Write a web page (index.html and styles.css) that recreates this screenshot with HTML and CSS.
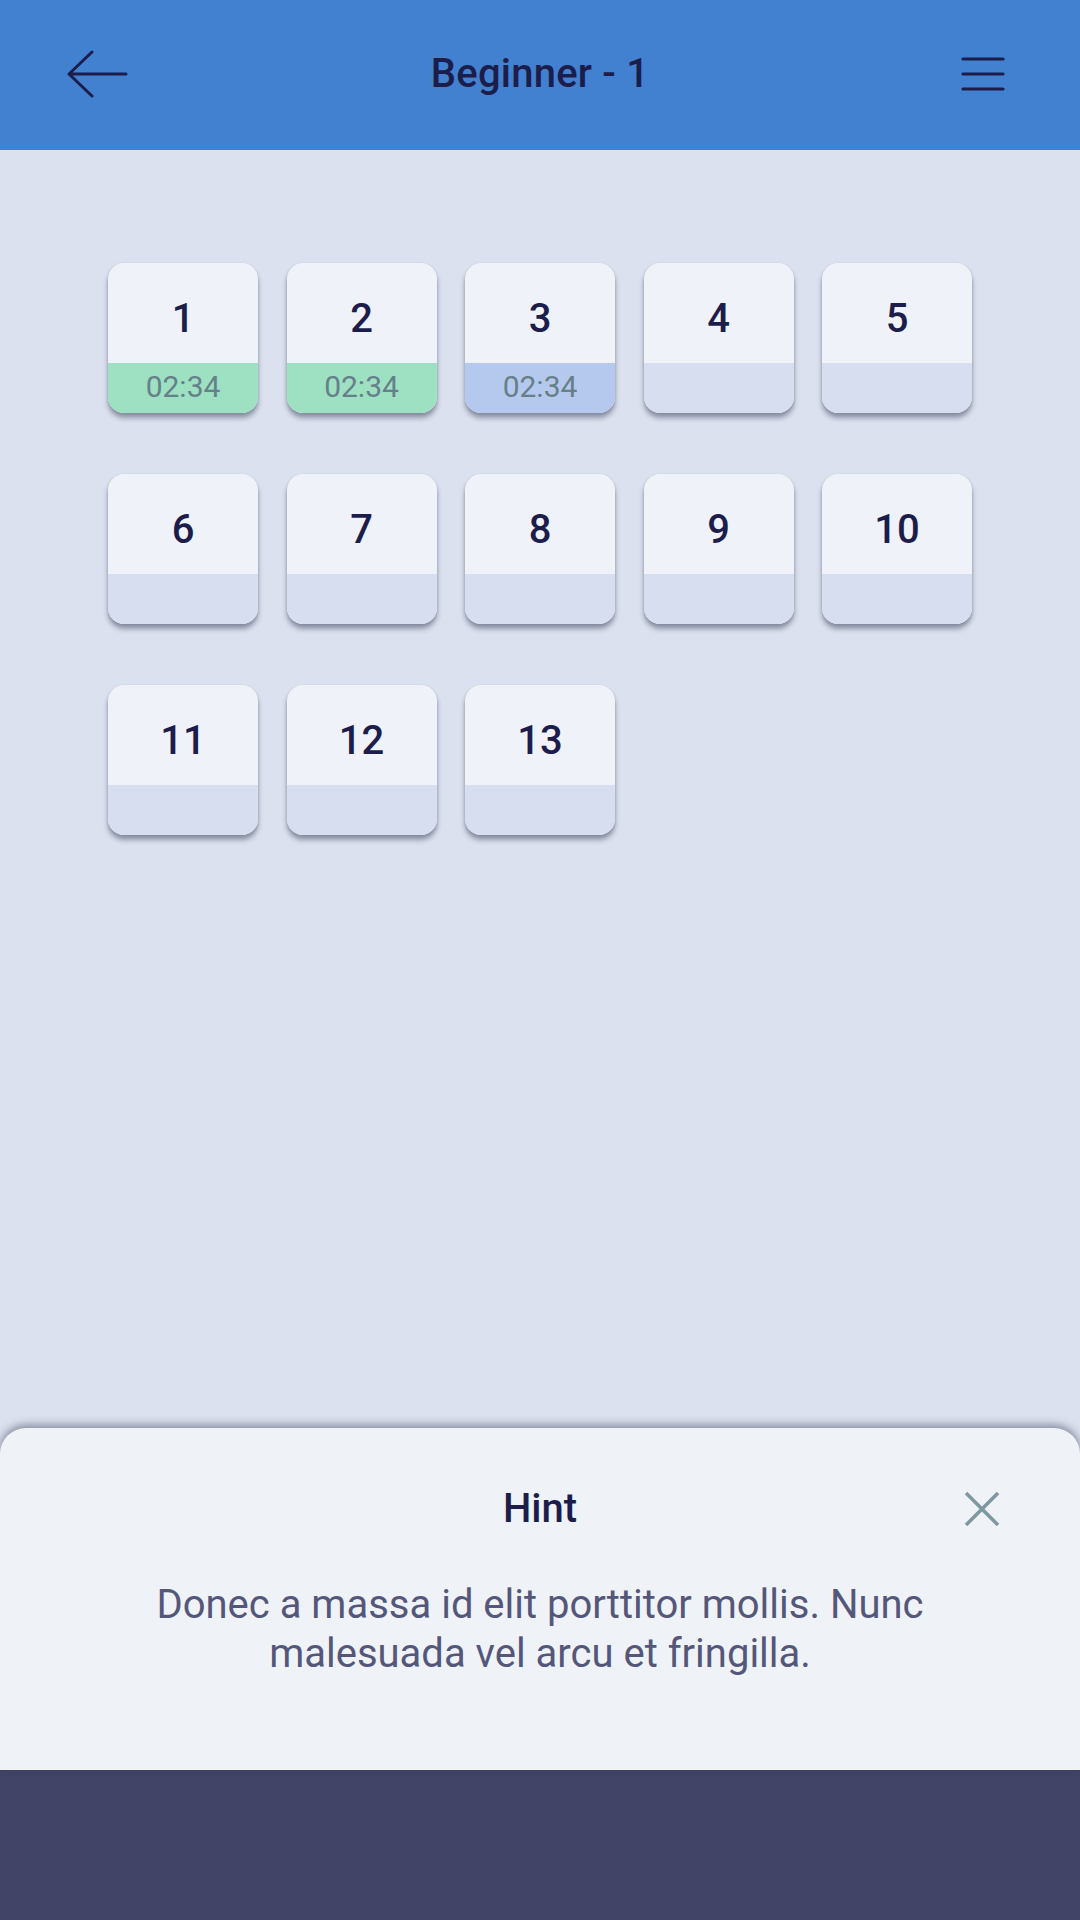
FILE: index.html
```html
<!DOCTYPE html>
<html lang="en">
<head>
<meta charset="utf-8">
<title>Beginner - 1</title>
<link rel="stylesheet" href="styles.css">
</head>
<body>
<div class="screen">
  <header class="topbar">
    <button class="icon-btn back" aria-label="Back">
      <svg width="62" height="48" viewBox="0 0 62 48"><path d="M60 24H3M26 2L3 24L26 46" fill="none" stroke="#1d1d4b" stroke-width="3" stroke-linecap="round" stroke-linejoin="round"/></svg>
    </button>
    <h1 class="title">Beginner - 1</h1>
    <button class="icon-btn menu" aria-label="Menu">
      <svg width="44" height="36" viewBox="0 0 44 36"><path d="M2 3H42M2 18H42M2 33H42" fill="none" stroke="#1d1d4b" stroke-width="3.2" stroke-linecap="round"/></svg>
    </button>
  </header>

  <main class="levels">
    <div class="grid">
      <div class="tile done"><div class="num">1</div><div class="time">02:34</div></div>
      <div class="tile done"><div class="num">2</div><div class="time">02:34</div></div>
      <div class="tile current"><div class="num">3</div><div class="time">02:34</div></div>
      <div class="tile"><div class="num">4</div><div class="time"></div></div>
      <div class="tile"><div class="num">5</div><div class="time"></div></div>
      <div class="tile"><div class="num">6</div><div class="time"></div></div>
      <div class="tile"><div class="num">7</div><div class="time"></div></div>
      <div class="tile"><div class="num">8</div><div class="time"></div></div>
      <div class="tile"><div class="num">9</div><div class="time"></div></div>
      <div class="tile"><div class="num">10</div><div class="time"></div></div>
      <div class="tile"><div class="num">11</div><div class="time"></div></div>
      <div class="tile"><div class="num">12</div><div class="time"></div></div>
      <div class="tile"><div class="num">13</div><div class="time"></div></div>
    </div>
  </main>

  <section class="sheet">
    <div class="sheet-head">
      <h2 class="sheet-title">Hint</h2>
      <button class="icon-btn close" aria-label="Close">
        <svg width="36" height="36" viewBox="0 0 36 36"><path d="M2 2L34 34M34 2L2 34" fill="none" stroke="#7f99a0" stroke-width="3.6"/></svg>
      </button>
    </div>
    <p class="sheet-text">Donec a massa id elit porttitor mollis. Nunc malesuada vel arcu et fringilla.</p>
  </section>

  <footer class="navbar"></footer>
</div>
</body>
</html>
```

FILE: styles.css
```css
* { box-sizing: border-box; }

html, body {
  margin: 0;
  padding: 0;
  width: 1080px;
  height: 1920px;
  overflow: hidden;
  font-family: Roboto, "Noto Sans", "Liberation Sans", sans-serif;
  background: #dbe1ee;
}

.screen {
  width: 1080px;
  height: 1920px;
  display: flex;
  flex-direction: column;
}

.topbar {
  height: 150px;
  flex: 0 0 150px;
  background: #4181d0;
  display: grid;
  grid-template-columns: 1fr auto 1fr;
  align-items: center;
  padding: 0;
}

.icon-btn {
  border: 0;
  background: none;
  padding: 0;
  margin: 0;
  display: flex;
  align-items: center;
  justify-content: center;
}

.back { width: 62px; height: 48px; margin: -2px 0 0 66px; justify-self: start; }
.menu { width: 44px; height: 36px; margin: -2px 75px 0 0; justify-self: end; }

.title {
  margin: 0 0 4px 0;
  font-size: 40px;
  font-weight: 500;
  color: #1d1d4b;
  letter-spacing: 0.2px;
}

.levels {
  flex: 1 1 auto;
  padding: 113px 0 0 108px;
}

.grid {
  display: grid;
  grid-template-columns: repeat(5, 150px);
  column-gap: 28.5px;
  row-gap: 61px;
}

.tile {
  width: 150px;
  height: 150px;
  border-radius: 16px;
  overflow: hidden;
  background: #eff3f9;
  box-shadow: 0 5px 5px rgba(40, 48, 75, 0.42), 0 1px 3px rgba(40, 48, 75, 0.15);
  display: flex;
  flex-direction: column;
}

.num {
  height: 100px;
  padding-top: 10px;
  display: flex;
  align-items: center;
  justify-content: center;
  font-size: 40px;
  font-weight: 500;
  color: #1d1d4b;
}

.time {
  height: 50px;
  display: flex;
  align-items: center;
  justify-content: center;
  background: #d6deef;
  font-size: 30px;
  color: #66808a;
  padding-bottom: 3px;
}

.done .time { background: #9de1c2; }
.current .time { background: #b5c9ef; }

.sheet {
  flex: 0 0 342px;
  height: 342px;
  background: #eff3f8;
  border-radius: 26px 26px 0 0;
  box-shadow: 0 -3px 8px rgba(45, 50, 75, 0.5);
  padding: 50px 80px 0 80px;
  position: relative;
  z-index: 1;
}

.sheet-head {
  height: 60px;
  display: flex;
  align-items: center;
  justify-content: center;
  position: relative;
}

.sheet-title {
  margin: 0;
  font-size: 40px;
  font-weight: 500;
  color: #1d1d4b;
}

.close {
  position: absolute;
  right: 0;
  top: 13px;
  width: 36px;
  height: 36px;
}

.sheet-text {
  margin: 42px 0 0 0;
  font-size: 40px;
  line-height: 49px;
  text-align: center;
  color: #55577a;
  padding: 0;
}

.navbar {
  flex: 0 0 150px;
  height: 150px;
  background: #414467;
}
```
